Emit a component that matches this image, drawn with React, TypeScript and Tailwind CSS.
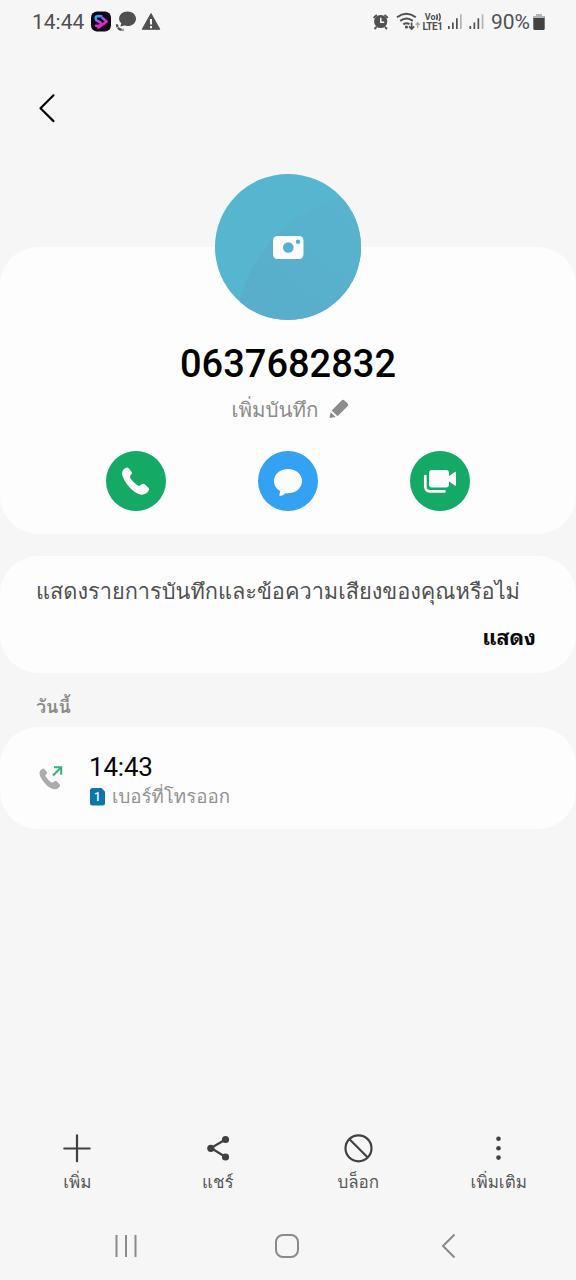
import type { ReactNode } from "react";

const PHONE_PATH =
  "M4 .4Q5.600-.4 6.700 1l3 3.600q.8 1-.1 2.100L8.300 8.300q-.8 1.100 0 2.300 3 4.900 7 7.400 1.500.9 2.900-.1l1.900-1.100q1.500-.9 2.900.4l3.600 3.400q1.200 1.300.2 2.700-2.500 4.300-7.300 4.100Q13.500 27 7 19.500.5 11.500 0 6.500-.1 2.300 4 .4z";

function StatusBar() {
  return (
    <div className="flex h-11 items-center pl-8 text-[#505050]">
      <span className="w-[59px] text-[21px] leading-none">14:44</span>
      <svg width="70" height="22" viewBox="0 0 70 22">
        <defs>
          <linearGradient id="brand" x1="0" y1="0" x2="0.5" y2="1">
            <stop offset="0.15" stopColor="#3f9bff" />
            <stop offset="0.5" stopColor="#b04bf0" />
            <stop offset="0.85" stopColor="#f21fc0" />
          </linearGradient>
        </defs>
        <rect x="0" y="0.500" width="20" height="20" rx="6" fill="#0d0914" />
        <path
          d="M10.300 5.200 7 5Q4.500 5.300 4.600 7.300T6.300 9.800l2.700 1.400q1.600 1.300.4 2.700T5 14.800M11.500 7 15.700 10.600 7.500 16.500"
          fill="none"
          stroke="url(#brand)"
          strokeWidth="2.500"
          strokeLinecap="round"
          strokeLinejoin="round"
        />
        <path
          d="M36.500.5c5 0 8.500 3.200 8.500 7.200s-3.500 7.400-8.500 7.400c-1.200 0-2.200-.2-3.200-.5l-4 .9 1-3.200c-1.400-1.300-2.200-2.800-2.200-4.600 0-4 3.400-7.200 8.400-7.200z"
          fill="currentColor"
        />
        <path
          d="M26 13.300q0 2.900 1.700 4.200t4.800 1.500"
          fill="none"
          stroke="currentColor"
          strokeWidth="2.300"
          strokeDasharray="2.800 .7 4.500 .7 4"
        />
        <path d="M60 2.500 68.800 18.300H51.200z" fill="currentColor" stroke="currentColor" strokeLinejoin="round" />
        <path d="M60 8v5.500M60 15v2.200" stroke="#f6f6f6" strokeWidth="2" />
      </svg>
      <svg className="ml-[211px]" width="114" height="24" viewBox="372 9 114 24">
        <g fill="none" stroke="currentColor">
          <circle cx="380.700" cy="20.500" r="6.600" fill="currentColor" stroke="none" />
          <path d="M373.700 17a9 9 0 0 1 3.200-3M387.700 17a9 9 0 0 0-3.200-3" strokeWidth="2" />
          <path d="m376.500 26-2 2M385 26l2 2" strokeWidth="1.800" />
        </g>
        <path d="M380.800 16.800v4.500h3.400" stroke="#f6f6f6" strokeWidth="1.500" fill="none" />
        <g fill="none" stroke="currentColor" strokeWidth="2">
          <path d="M397 16.200q9.400-7 18.800 0M400.200 19.900q6.300-4.700 12.600 0M403.300 23.300q3.200-2.100 6.200 0" />
          <path d="M411.600 21.500v6M409 25.300l2.600 2.700 2.600-2.700" strokeWidth="1.700" />
        </g>
        <circle cx="406.400" cy="26" r="1.600" fill="currentColor" />
        <path d="M417.700 27v-5M415.700 24l2-2.200 2 2.200" stroke="#a8a8a8" strokeWidth="1.300" fill="none" />
        <text x="424.800" y="19" fontSize="9" fontWeight="700" fill="currentColor">
          Vo
        </text>
        <path d="M436.500 13.300q1.700 2.800 0 5.700M439 12.300q2.400 3.700 0 7.500" fill="none" stroke="currentColor" strokeWidth="1.500" />
        <text x="422.500" y="28.600" fontSize="10" fontWeight="700" fill="currentColor" textLength="20.500">
          LTE1
        </text>
        <g fill="currentColor">
          <path d="M448 25h1.700v3H448zM452 21.500h1.700V28H452zM456 17.300h1.700V28H456z" />
          <path d="M460 13.300h1.700V28H460z" opacity=".4" />
          <path d="M469.500 25h1.700v3h-1.700zM473.500 21.500h1.700V28h-1.700zM477.500 17.300h1.700V28h-1.700z" />
          <path d="M481.700 13.300h1.700V28h-1.700z" opacity=".4" />
        </g>
      </svg>
      <span className="ml-[5px] w-[42px] text-[21px] leading-none">90%</span>
      <svg width="12" height="17" viewBox="0 0 12 17">
        <path d="M3 0h6v2h3v3H0V2h3z" fill="#b4b4b4" />
        <path d="M.3 4h11.400v10.500q0 1.500-1.500 1.500H1.800q-1.500 0-1.500-1.500z" fill="#424242" />
      </svg>
    </div>
  );
}

function Avatar() {
  return (
    <svg className="mx-auto -mt-[73px]" width="146" height="146" viewBox="0 0 146 146">
      <defs>
        <clipPath id="avatar">
          <circle cx="73" cy="73" r="73" />
        </clipPath>
        <linearGradient id="shade" x1="0" y1="1" x2="0.8" y2="0">
          <stop offset="0" stopColor="#58adca" />
          <stop offset="1" stopColor="#58b3ce" />
        </linearGradient>
      </defs>
      <g clipPath="url(#avatar)">
        <path d="M0 0h146v146H0z" fill="#57b6cf" />
        <path d="M21 146C29 86 67 40 124 25l22-3v124z" fill="url(#shade)" />
      </g>
      <rect x="58" y="62" width="30.500" height="23" rx="4.500" fill="#fcfcfc" />
      <circle cx="73.300" cy="73.500" r="5.300" fill="#57b1cc" />
      <circle cx="83" cy="67.700" r="2.200" fill="#57b1cc" />
    </svg>
  );
}

function RoundButton({ color, children }: { color: string; children: ReactNode }) {
  return (
    <button className={`flex size-[60px] items-center justify-center rounded-full ${color}`}>
      <svg width="60" height="60" viewBox="0 0 60 60" fill="#fcfcfc">
        {children}
      </svg>
    </button>
  );
}

function ToolbarItem({ label, children }: { label: string; children: ReactNode }) {
  return (
    <button className="flex w-[140.5px] flex-col items-center text-[#404040]">
      <svg width="32" height="32" viewBox="-16 -16 32 32" fill="none" stroke="currentColor">
        {children}
      </svg>
      <span className="mt-[3px] whitespace-nowrap text-[17px] leading-[30px] text-[#585858]">{label}</span>
    </button>
  );
}

export default function App() {
  return (
    <div className="flex h-[1280px] w-[576px] flex-col overflow-hidden bg-[#f6f6f6] font-[Roboto,Loma,'Noto_Sans',sans-serif]">
      <StatusBar />
      <header className="flex h-[203px] items-start pl-[38px] pt-[49px]">
        <svg width="18" height="30" viewBox="0 0 18 30" fill="none" stroke="#050505" strokeWidth="2.200">
          <path d="M15.500 2.300 2.500 15.300l13 12.800" strokeLinecap="round" strokeLinejoin="round" />
        </svg>
      </header>

      <section className="flex h-[287px] flex-col rounded-[38px] bg-[#fdfdfd]">
        <Avatar />
        <h1 className="mt-[21px] text-center text-[38px] font-medium leading-[46px] text-black">0637682832</h1>
        <div className="mt-[6px] flex h-[32px] items-center justify-center gap-[10px] pl-1 text-[#8c8c8c]">
          <span className="pt-px text-[20.5px] leading-[32px]">เพิ่มบันทึก</span>
          <svg width="20" height="20" viewBox="0 0 20 20" fill="currentColor">
            <path d="M2.700 11.500 12.500 1.500q1.500-1.500 3-.1l3 2.900q1.400 1.400 0 2.900L8.500 17.200zM1.700 13.300l5 4.800L.5 19z" />
          </svg>
        </div>
        <div className="mt-[26px] flex justify-center gap-[92px]">
          <RoundButton color="bg-[#15a966]">
            <path d={PHONE_PATH} transform="translate(16 16.300)" />
          </RoundButton>
          <RoundButton color="bg-[#33a2f3]">
            <path d="M30 18c8 0 14 5.200 14 12s-6 12.200-14 12.200h-2.500Q25 44.700 22 45q-1-.2-.6-1.200l1-3.800C18.500 38 16 34.500 16 30c0-6.800 6-12 14-12z" />
          </RoundButton>
          <RoundButton color="bg-[#15a966]">
            <rect x="19" y="19" width="20" height="17.500" rx="3" />
            <path d="m38.500 25.500 6.200-4.500q1.300-.6 1.300.8v11.900q0 1.500-1.300.8l-6.200-4.500z" />
            <path
              d="M15.300 25v10.200q0 5.200 5.200 5.200H34.500"
              fill="none"
              stroke="#fcfcfc"
              strokeWidth="2.700"
              strokeLinecap="round"
            />
          </RoundButton>
        </div>
      </section>

      <section className="mt-[22px] flex h-[117px] flex-col rounded-[38px] bg-[#fdfdfd] px-9 pt-[19px]">
        <p className="whitespace-nowrap text-[21.75px] leading-[34px] text-[#505050]">
          แสดงรายการบันทึกและข้อความเสียงของคุณหรือไม่
        </p>
        <button className="mt-[13px] self-end pr-1 font-[Roboto,'Noto_Sans_Thai_Looped','Noto_Sans',sans-serif] text-[21.5px] font-bold leading-[32px] text-[#0a0a0a]">
          แสดง
        </button>
      </section>

      <h2 className="h-[54px] pl-9 pt-[19px] text-[18px] font-semibold leading-[30px] text-[#8a8a8a]">วันนี้</h2>

      <section className="flex h-[102px] items-center rounded-[38px] bg-[#fdfdfd] pl-[38px]">
        <svg width="26" height="26" viewBox="0 0 26 26">
          <path d={PHONE_PATH} fill="#acacac" transform="translate(1.500 3.500) scale(.76)" />
          <path d="m15 10.500 8-8M16 2.300h7.200v7.500" fill="none" stroke="#35b27d" strokeWidth="2" />
        </svg>
        <div className="ml-[25px] flex flex-col pt-[7px]">
          <span className="text-[26px] leading-[30px] tracking-[-0.2px] text-[#080808]">14:43</span>
          <div className="flex h-[30px] items-center gap-[7px]">
            <svg width="16" height="18" viewBox="0 0 16 18">
              <path d="M3.500 0h9L16 3.500V15q0 2.500-2.500 2.500h-10Q1 17.500 1 15V2.500Q1 0 3.500 0z" fill="#0878ac" />
              <text x="8.300" y="13" fontSize="12" fontWeight="500" fill="#fff" textAnchor="middle">
                1
              </text>
            </svg>
            <span className="text-[18.7px] leading-[30px] text-[#929292]">เบอร์ที่โทรออก</span>
          </div>
        </div>
      </section>

      <footer className="mt-auto">
        <div className="flex h-[80px] pl-[7px]">
          <ToolbarItem label="เพิ่ม">
            <path d="M-12.700.5h25.400M0-12.700v26" strokeWidth="2.200" strokeLinecap="round" />
          </ToolbarItem>
          <ToolbarItem label="แชร์">
            <path d="M7.500-8.500-7 0 7.500 9" strokeWidth="2.200" />
            <g fill="currentColor" stroke="none">
              <circle cx="7.500" cy="-8.500" r="3.600" />
              <circle cx="-7.200" cy="0.300" r="3.600" />
              <circle cx="7.500" cy="9" r="3.600" />
            </g>
          </ToolbarItem>
          <ToolbarItem label="บล็อก">
            <circle cx="0.500" r="13" cy="0.300" strokeWidth="2.200" />
            <path d="m-8.500-8.700 18 18" strokeWidth="2.200" />
          </ToolbarItem>
          <ToolbarItem label="เพิ่มเติม">
            <g fill="currentColor" stroke="none">
              <circle cx="-0.500" cy="-9.200" r="2.300" />
              <circle cx="-0.500" cy="0.200" r="2.300" />
              <circle cx="-0.500" cy="9.600" r="2.300" />
            </g>
          </ToolbarItem>
        </div>
        <nav className="flex h-[68px] items-center justify-center gap-[133px] pr-0.5">
          <svg width="28" height="28" viewBox="0 0 28 28" stroke="#8a8a8a" strokeWidth="2">
            <path d="M4.500 3v22M14 3v22M23.500 3v22" />
          </svg>
          <svg width="28" height="28" viewBox="0 0 28 28" fill="none" stroke="#8a8a8a" strokeWidth="2">
            <rect x="3" y="3" width="22" height="22" rx="7" />
          </svg>
          <svg width="28" height="28" viewBox="0 0 28 28" fill="none" stroke="#8a8a8a" strokeWidth="2">
            <path d="M20.500 2.500 9 14l11.500 11.500" />
          </svg>
        </nav>
      </footer>
    </div>
  );
}
